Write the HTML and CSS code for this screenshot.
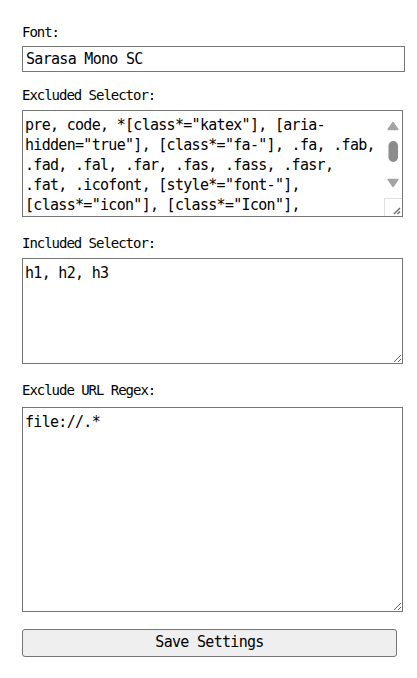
FILE: index.html
```html
<!DOCTYPE html>
<html lang="en">
<head>
<meta charset="utf-8">
<title>Settings</title>
<link rel="stylesheet" href="styles.css">
</head>
<body>
<form class="settings">
  <div class="field field-font">
    <label class="label" for="font">Font:</label>
    <input class="text-input" id="font" type="text" value="Sarasa Mono SC">
  </div>
  <div class="field">
    <label class="label" for="excluded">Excluded Selector:</label>
    <div class="scroll-wrap">
      <textarea class="area area-small area-scroll" id="excluded">pre, code, *[class*="katex"], [aria-hidden="true"], [class*="fa-"], .fa, .fab, .fad, .fal, .far, .fas, .fass, .fasr, .fat, .icofont, [style*="font-"], [class*="icon"], [class*="Icon"], [class*="symbol"], [class*="Symbol"], .glyphicon, .material-icons</textarea>
      <div class="scrollbar" aria-hidden="true">
        <svg width="18" height="105" viewBox="0 0 18 105">
          <path d="M9 11.5 13.8 18.5H4.2z" fill="#a3a3a3" stroke="#a3a3a3" stroke-width="1.5" stroke-linejoin="round"/>
          <rect x="4.5" y="30" width="9.5" height="21" rx="4.75" fill="#8b8b8b"/>
          <path d="M4.2 68.5H13.8L9 75.5z" fill="#a3a3a3" stroke="#a3a3a3" stroke-width="1.5" stroke-linejoin="round"/>
          <path d="M0.5 87V105M0 87.5H18" stroke="#e0e0e0" stroke-width="1"/>
          <path d="M10 103 16 97M13.5 103 16 100.5" stroke="#6a6a6a" stroke-width="1.4"/>
        </svg>
      </div>
    </div>
  </div>
  <div class="field">
    <label class="label" for="included">Included Selector:</label>
    <textarea class="area area-small2" id="included">h1, h2, h3</textarea>
  </div>
  <div class="field field-regex">
    <label class="label" for="regex">Exclude URL Regex:</label>
    <textarea class="area area-large" id="regex">file://.*</textarea>
  </div>
  <button class="save" type="button">Save Settings</button>
</form>
</body>
</html>
```

FILE: styles.css
```css
html, body {
  margin: 0;
  padding: 0;
  background: #ffffff;
}

body {
  font-family: "DejaVu Sans Mono", "Liberation Mono", monospace;
  color: #000000;
}

.settings {
  display: flex;
  flex-direction: column;
  align-items: flex-start;
  padding: 23px 0 0 22px;
}

.field {
  display: flex;
  flex-direction: column;
  gap: 6px;
  margin-bottom: 17px;
}

.field-font {
  gap: 5px;
  margin-bottom: 14px;
}

.field-regex {
  gap: 8px;
}

.label {
  font-size: 14px;
  line-height: 18px;
  letter-spacing: -1.03px;
  height: 18px;
}

.text-input {
  box-sizing: border-box;
  width: 383px;
  height: 26px;
  margin: 0;
  padding: 0 3px;
  border: 1px solid #767676;
  border-radius: 0;
  font-family: "DejaVu Sans Mono", "Liberation Mono", monospace;
  font-size: 15px;
  letter-spacing: -0.7px;
  color: #000;
  outline: none;
}

.area {
  display: block;
  box-sizing: border-box;
  width: 381px;
  margin: 0;
  padding: 4px 5px 2px 2px;
  border: 1px solid #767676;
  border-radius: 0;
  font-family: "DejaVu Sans Mono", "Liberation Mono", monospace;
  font-size: 15px;
  line-height: 20px;
  letter-spacing: -0.7px;
  color: #000;
  outline: none;
  resize: both;
}

.area-small {
  height: 107px;
}

.area-small2 {
  height: 106px;
}

.area-large {
  height: 205px;
}

.scroll-wrap {
  position: relative;
  width: 381px;
}

.area-scroll {
  overflow-y: hidden;
  padding-right: 25px;
}

.scrollbar {
  position: absolute;
  top: 1px;
  right: 1px;
  width: 18px;
  height: 105px;
  background: #ffffff;
  pointer-events: none;
}

.scrollbar svg {
  display: block;
}

.save {
  box-sizing: border-box;
  width: 375px;
  height: 28px;
  margin: 0;
  padding: 0 0 2px;
  border: 1px solid #767676;
  border-radius: 3px;
  background: #efefef;
  font-family: "DejaVu Sans Mono", "Liberation Mono", monospace;
  font-size: 15px;
  letter-spacing: -0.7px;
  color: #000;
}
```
